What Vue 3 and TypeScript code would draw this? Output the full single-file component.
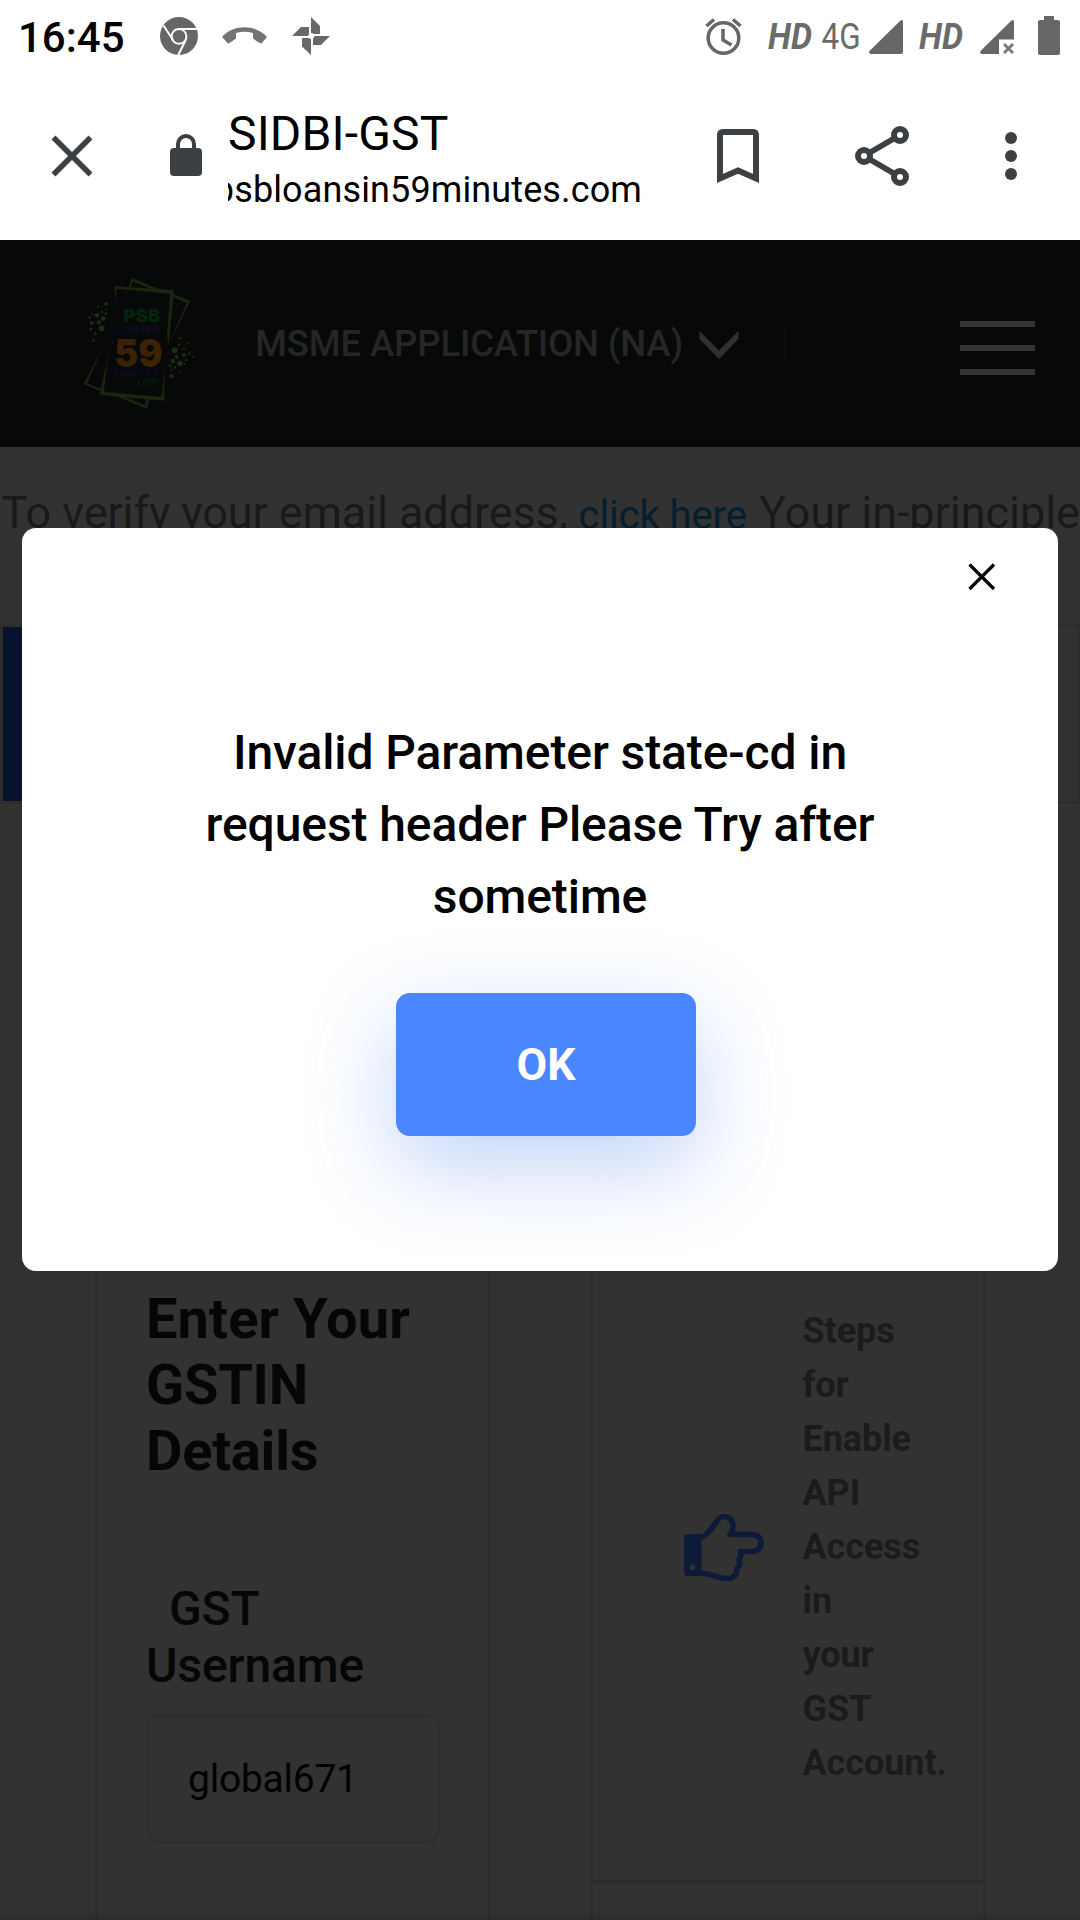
<script setup lang="ts">
interface Dot {
  x: number
  y: number
  r: number
}

const steps: string[] = ['Steps', 'for', 'Enable', 'API', 'Access', 'in', 'your', 'GST', 'Account.']
const username = 'global671'

const d = (x: number, y: number, r: number): Dot => ({ x, y, r })
const dots: Dot[] = [
  d(139, 132, 6), d(114, 141, 3), d(138, 148, 3), d(126, 156, 4), d(137, 161, 4), d(96, 162, 3),
  d(110, 166, 7), d(89, 173, 4), d(130, 176, 7), d(117, 187, 6.5), d(95, 189, 6), d(125, 205, 9),
  d(93, 207, 4), d(106, 221, 4), d(101, 242, 4),
  d(359, 234, 4), d(384, 249, 3), d(357, 255, 4), d(372, 267, 4), d(344, 271, 9), d(389, 280, 4),
  d(372, 285, 6), d(350, 290, 6), d(399, 291, 3), d(379, 300, 4), d(338, 303, 7), d(360, 310, 8),
  d(374, 312, 3), d(330, 318, 4), d(345, 322, 4), d(334, 331, 3), d(358, 336, 3), d(334, 348, 6),
]
</script>

<template>
  <div class="screen">
    <header class="status">
      <span class="clock">16:45</span>
      <svg class="status-left" width="180" height="72" viewBox="155 0 180 72">
        <circle cx="179" cy="36" r="19" fill="#666" />
        <g fill="none" stroke="#fff" stroke-width="2">
          <circle cx="179" cy="36.400" r="7.400" />
          <path d="M179 29H197M173 40L163.500 25.500M185.500 40.500L178 55.500" />
        </g>
        <path d="M222 37C233 24 256 24 267 37L261.500 43.500Q260 43.500 253 38.500V33Q244.500 30.500 236 33V38.500Q229 43.500 228 43.500Z" fill="#747474" />
        <g fill="#696969">
          <path d="M311 17L320 26V34H311Z" />
          <path d="M292 36L301 27H309V36Z" />
          <path d="M302 38H311V55L302 46.500Z" />
          <path d="M313 36H330L321 45H313Z" />
        </g>
        <circle cx="311.300" cy="36" r="3" fill="#fff" />
      </svg>
      <svg class="status-right" width="370" height="72" viewBox="700 0 370 72">
        <g fill="none" stroke="#666" stroke-width="3.500">
          <circle cx="723.500" cy="38" r="15.300" />
          <path d="M723 29V40L731.500 45M706.500 26L714 19.500M733 19.500L740.500 26" />
        </g>
        <g fill="#6b6b6b" font-family="Roboto, sans-serif">
          <text x="768" y="48.500" font-size="36.500" font-weight="700" font-style="italic" textLength="44" lengthAdjust="spacingAndGlyphs">HD</text>
          <text x="821.500" y="49" font-size="37.500" textLength="39" lengthAdjust="spacingAndGlyphs">4G</text>
          <text x="919" y="48.500" font-size="36.500" font-weight="700" font-style="italic" textLength="44" lengthAdjust="spacingAndGlyphs">HD</text>
        </g>
        <g fill="#666">
          <path d="M870 50.500L900.500 20.500Q903 19 903 22V52Q903 54 901 54H871Q867.500 53.500 870 50.500Z" />
          <path d="M981 50.500L1011.500 20.500Q1014 19 1014 22V39.500H999V54H982Q979 53.500 981 50.500Z" />
          <path d="M1044 16H1054V20H1058Q1060 20 1060 22V53Q1060 55 1058 55H1040Q1038 55 1038 53V22Q1038 20 1040 20H1044Z" />
        </g>
        <path d="M1004 44L1013 53M1013 44L1004 53" stroke="#777" stroke-width="2.800" />
      </svg>
    </header>

    <nav class="toolbar">
      <svg width="210" height="168" viewBox="0 72 210 168">
        <path d="M53.500 137.500L90.500 174.500M90.500 137.500L53.500 174.500" stroke="#3c4043" stroke-width="5.500" />
        <rect x="170" y="148" width="32" height="28" rx="4" fill="#3c4043" />
        <path d="M178 150V144A8 8 0 0 1 194 144V150" fill="none" stroke="#3c4043" stroke-width="4" />
      </svg>
      <div class="address">
        <div class="title">SIDBI-GST</div>
        <div class="url"><span>psbloansin59minutes.com</span></div>
      </div>
      <svg width="380" height="168" viewBox="700 72 380 168">
        <g fill="none" stroke="#3c4043">
          <path d="M720 178.500V135Q720 132 723 132H753Q756 132 756 135V178.500L738 170.500Z" stroke-width="6" />
          <path d="M864 156L900 135M864 156L900 177" stroke-width="5.500" />
          <g stroke-width="6" fill="#fff">
            <circle cx="864" cy="156" r="6" />
            <circle cx="900" cy="135" r="6" />
            <circle cx="900" cy="177" r="6" />
          </g>
        </g>
        <g fill="#3c4043">
          <circle cx="1011" cy="138" r="6" />
          <circle cx="1011" cy="156" r="6" />
          <circle cx="1011" cy="174" r="6" />
        </g>
      </svg>
    </nav>

    <section class="site-header">
      <svg class="logo" width="160" height="160" viewBox="0 0 480 480">
        <g fill="#1d240f">
          <path fill-rule="evenodd" d="M163 78L342 91L326 255L321 225L331 101L170 86L165 125Z" />
          <path d="M207 81L215 54L310 92H285L218 64L212 82Z" />
          <path d="M342 103L391 123L324 257L380 129L340 111Z" />
          <path d="M143 288L120 405L312 422L314 328L305 411L132 396Z" />
          <path d="M129 262L71 372L122 394L125 387L81 370Z" />
          <path d="M165 407L260 446L269 418L260 417L254 435L188 409Z" />
        </g>
        <g fill="#222a12">
          <circle v-for="(p, i) in dots" :key="i" :cx="p.x" :cy="p.y" :r="p.r" />
        </g>
        <g font-family="Inter, 'Liberation Sans', sans-serif" font-weight="900">
          <text x="190" y="186" font-size="51" fill="#04240f" textLength="110" lengthAdjust="spacingAndGlyphs">PSB</text>
          <text x="158" y="221" font-size="35" fill="#0c0b1e" textLength="142" lengthAdjust="spacingAndGlyphs">LOANS</text>
          <text x="137" y="251" font-size="23" font-weight="700" fill="#0c0b1e" textLength="26" lengthAdjust="spacingAndGlyphs">IN</text>
          <text x="163" y="320" font-size="113" fill="#3c2105" textLength="145" lengthAdjust="spacingAndGlyphs">59</text>
          <text x="163" y="347" font-size="24" fill="#0c0b1e" textLength="132" lengthAdjust="spacingAndGlyphs">MINUTES</text>
          <text x="225" y="375" font-size="34" font-weight="400" font-family="'Open Sans', sans-serif" fill="#04240f" textLength="69" lengthAdjust="spacingAndGlyphs">.com</text>
        </g>
      </svg>
      <span class="menu-label">MSME APPLICATION (NA)</span>
      <svg class="chevron" width="40" height="30" viewBox="0 0 40 30">
        <path d="M.500 0L20 19.500L39.500 0V8L20 28L.500 8Z" fill="#303030" />
      </svg>
      <i class="divider"></i>
      <div class="burger"><i></i><i></i><i></i></div>
    </section>

    <main class="page">
      <p class="verify">To verify your email address, <a>click here</a><span class="after"> Your in-principle</span></p>
      <div class="tabs"><div class="tab-active"></div></div>
      <div class="cards">
        <section class="card form">
          <h2><span class="heading-first">Enter Your</span><br />GSTIN<br />Details</h2>
          <label><span class="indent">GST</span><br />Username</label>
          <div class="field">{{ username }}</div>
        </section>
        <section class="card help">
          <div class="help-row">
            <svg width="80" height="70" viewBox="0 0 80 70">
              <path d="M3 23H18Q22 22 28 14C33 7 35 2.500 40 2.500Q49 3 49 12Q49 18 46 20.500H68Q77 21 77 29Q77 37 68 37.500H56Q58 42 55 46Q57 51 53 54Q53 64 44 64.500C34 65 26 59 17 59H3Z" fill="none" stroke="#0e1b38" stroke-width="5.500" stroke-linejoin="round" />
              <path fill-rule="evenodd" d="M5 22H17.500V62H5Q0 62 0 57V27Q0 22 5 22ZM8.600 50.500A2.800 2.800 0 1 0 8.600 56.100A2.800 2.800 0 1 0 8.600 50.500Z" fill="#0e1b38" />
            </svg>
            <div class="steps"><div v-for="s in steps" :key="s">{{ s }}</div></div>
          </div>
        </section>
      </div>
      <div class="bottom-fade"></div>
    </main>

    <div class="modal" role="dialog">
      <div class="modal-top">
        <svg width="28" height="28" viewBox="0 0 28 28">
          <path d="M1.500 1.500L26 26M26 1.500L1.500 26" stroke="#000" stroke-width="3.2" />
        </svg>
      </div>
      <p class="message">
        Invalid Parameter state-cd in<br />
        request header Please Try after<br />
        sometime
      </p>
      <button class="ok" type="button">OK</button>
    </div>
  </div>
</template>

<style>
body {
  margin: 0;
  background: #323232;
}
</style>

<style scoped>
.screen {
  position: relative;
  width: 1080px;
  height: 1920px;
  overflow: hidden;
  background: #fff;
  font-family: Roboto, 'Liberation Sans', sans-serif;
  display: flex;
  flex-direction: column;
  white-space: nowrap;
}
svg {
  display: block;
  flex: none;
}
.status {
  height: 72px;
  display: flex;
  align-items: center;
}
.clock {
  width: 137px;
  padding-left: 18px;
  font-size: 42px;
  font-weight: 500;
  line-height: 72px;
  padding-top: 4px;
}
.status-right {
  margin-left: auto;
  margin-right: 10px;
}
.toolbar {
  height: 168px;
  display: flex;
}
.address {
  width: 472px;
  margin-left: 18px;
  padding-top: 33px;
}
.title {
  font-size: 48px;
  line-height: 58px;
  letter-spacing: 0.15px;
}
.url {
  width: 414px;
  overflow: hidden;
  display: flex;
  justify-content: flex-end;
  font-size: 36px;
  line-height: 48px;
  letter-spacing: 0.12px;
  margin-top: 3px;
}
.site-header {
  height: 207px;
  background: #070908;
  display: flex;
}
.logo {
  margin: 20px 0 0 60px;
}
.menu-label {
  margin-left: 35px;
  width: 443px;
  font-size: 36.5px;
  font-weight: 500;
  letter-spacing: -0.13px;
  line-height: 207px;
  color: #262626;
}
.chevron {
  margin: 91px 0 0 1px;
}
.divider {
  width: 1px;
  height: 42px;
  margin: 83px 0 0 45px;
  background: #0c0e0d;
}
.burger {
  width: 75px;
  margin: 81px 0 0 175px;
  display: flex;
  flex-direction: column;
  gap: 18px;
}
.burger i {
  height: 6px;
  background: #333;
}
.page {
  height: 1473px;
  background: #323232;
  display: flex;
  flex-direction: column;
  overflow: hidden;
}
.verify {
  flex: none;
  margin: 0;
  padding: 36px 0 0 1px;
  height: 141px;
  font-size: 45px;
  line-height: 60px;
  letter-spacing: -0.09px;
  color: #191919;
}
.verify a {
  position: relative;
  top: 1px;
  font-size: 40px;
  color: #051d2d;
}
.after {
  margin-left: 1px;
  letter-spacing: -0.04px;
}
.tabs {
  height: 174px;
  flex: none;
  border: 3px solid #2d2d2d;
}
.tab-active {
  width: 268px;
  height: 174px;
  background: #06122e;
}
.cards {
  flex: 1;
  min-height: 0;
  overflow: hidden;
  display: flex;
  gap: 99px;
  padding: 60px 0 0 95px;
}
.card {
  width: 390px;
  height: 1100px;
  border: 3px solid #2d2d2d;
}
.card h2 {
  margin: 419px 0 0 48px;
  font-size: 56px;
  line-height: 66px;
  font-weight: 700;
  letter-spacing: -0.25px;
  color: #060606;
}
.heading-first {
  letter-spacing: 0.1px;
}
.card label {
  display: block;
  margin: 96px 0 0 48px;
  font-size: 48px;
  line-height: 57px;
  font-weight: 500;
  letter-spacing: -0.1px;
  color: #060606;
}
.indent {
  margin-left: 23px;
}
.field {
  box-sizing: border-box;
  width: 294px;
  height: 130px;
  margin: 20px 0 0 48px;
  border: 3px solid #2e2e2e;
  border-radius: 15px;
  padding-left: 39px;
  font-size: 39px;
  letter-spacing: -0.25px;
  line-height: 124px;
  color: #000;
}
.help-row {
  height: 1016px;
  border-bottom: 3px solid #2c2c2c;
  box-sizing: border-box;
  display: flex;
}
.help-row svg {
  margin: 647px 0 0 91px;
}
.steps {
  margin: 437px 0 0 38.5px;
  font-size: 36px;
  line-height: 54px;
  font-weight: 700;
  letter-spacing: -0.08px;
  color: #1b1b1b;
}
.bottom-fade {
  flex: none;
  height: 10px;
  margin-top: -10px;
  position: relative;
  background: linear-gradient(rgba(0, 0, 0, 0), rgba(0, 0, 0, 0.12));
}
.modal {
  position: absolute;
  left: 22px;
  top: 528px;
  width: 1036px;
  height: 743px;
  background: #fff;
  border-radius: 14px;
  overflow: hidden;
  text-align: center;
}
.modal-top {
  display: flex;
  justify-content: flex-end;
  padding: 35px 62px 0 0;
}
.message {
  margin: 126px 0 0;
  font-size: 48px;
  line-height: 72px;
  font-weight: 500;
  letter-spacing: -0.1px;
  color: #000;
}
.ok {
  display: block;
  margin: 60px 0 0 374px;
  width: 300px;
  height: 143px;
  padding: 0;
  border: 0;
  border-radius: 14px;
  background: #4a86ff;
  box-shadow: 0 30px 90px rgba(50, 112, 230, 0.31);
  color: #fff;
  font: 700 44.5px/145px Roboto, 'Liberation Sans', sans-serif;
}
</style>
